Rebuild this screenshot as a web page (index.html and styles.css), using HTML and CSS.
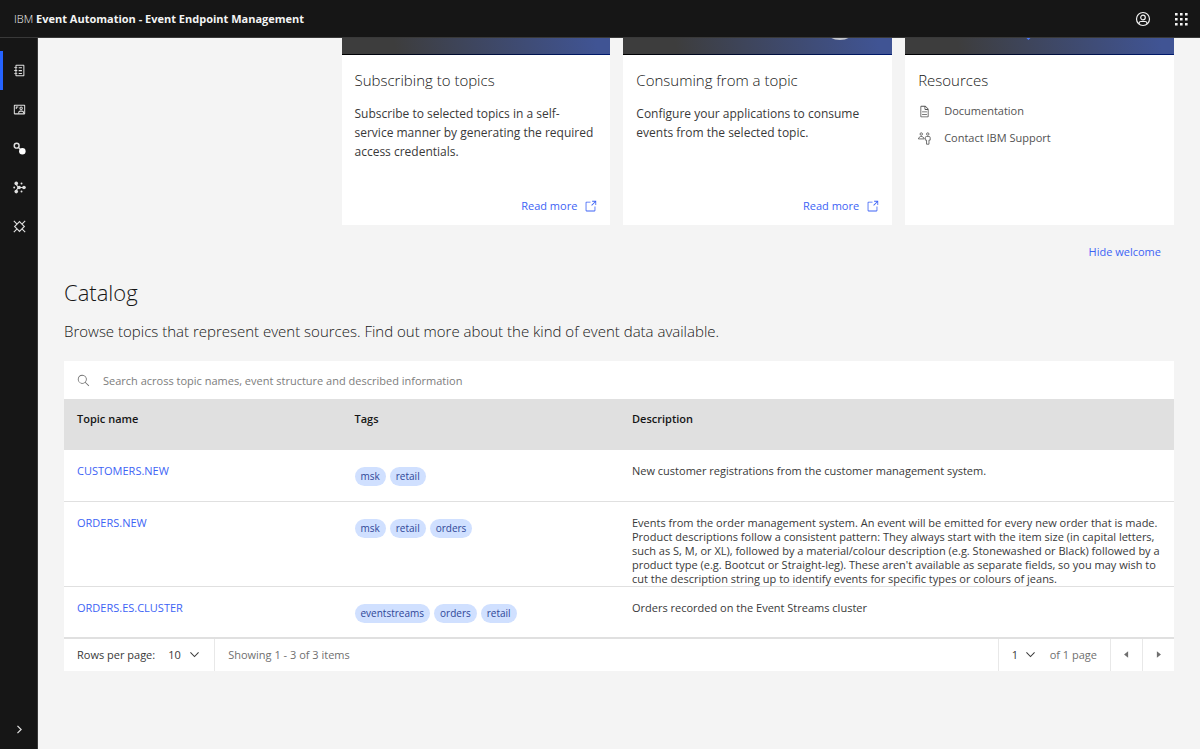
FILE: index.html
```html
<!DOCTYPE html>
<html lang="en">
<head>
<meta charset="utf-8">
<title>Event Endpoint Management</title>
<link rel="stylesheet" href="styles.css">
</head>
<body>
<header class="topbar">
  <div class="brand">IBM <strong>Event Automation - Event Endpoint Management</strong></div>
  <div class="topbar-actions">
    <button class="icon-btn" aria-label="User profile"><svg class="icon icon-lg" viewBox="0 0 32 32"><g fill="none" stroke="currentColor" stroke-width="2.4"><circle cx="16" cy="16" r="13"/><circle cx="16" cy="13" r="4.6"/><path d="M8 26v-1a4 4 0 0 1 4-4h8a4 4 0 0 1 4 4v1"/></g></svg></button>
    <button class="icon-btn" aria-label="Switch application"><svg class="icon icon-lg" viewBox="0 0 16 16"><path d="M2 2h2.600v2.600H2zM7 2h2.600v2.600H7zM12 2h2.600v2.600H12zM2 7h2.600v2.600H2zM7 7h2.600v2.600H7zM12 7h2.600v2.600H12zM2 12h2.600v2.600H2zM7 12h2.600v2.600H7zM12 12h2.600v2.600H12z"/></svg></button>
  </div>
</header>
<div class="shell">
  <nav class="sidebar" aria-label="Main">
    <a class="nav-item nav-active" href="#" aria-label="Catalog"><svg class="icon" viewBox="0 0 32 32"><path d="M26 2H8a2 2 0 0 0-2 2v4H3v2h3v5H3v2h3v5H3v2h3v4a2 2 0 0 0 2 2h18a2 2 0 0 0 2-2V4a2 2 0 0 0-2-2Zm-.5 25.500H8.500V24h2v-2h-2v-5h2v-2h-2v-5h2V8h-2V4.500h17Z"/><path d="M14 8h8v2.600h-8zM14 15h8v2.600h-8zM14 22h8v2.600h-8z"/></svg></a>
    <a class="nav-item" href="#" aria-label="Subscriptions"><svg class="icon" viewBox="0 0 32 32"><path d="M28 4H4a2 2 0 0 0-2 2v20a2 2 0 0 0 2 2h24a2 2 0 0 0 2-2V6a2 2 0 0 0-2-2ZM4.500 25.500v-19h23v19Z"/><g fill="none" stroke="currentColor" stroke-width="2.500"><circle cx="20" cy="13" r="3"/><path d="M14 26v-2a4 4 0 0 1 4-4h4a4 4 0 0 1 4 4v2M7 10h6M8 9v6"/></g></svg></a>
    <a class="nav-item" href="#" aria-label="Topics"><svg class="icon" viewBox="0 0 32 32"><circle cx="9" cy="9" r="6" fill="none" stroke="currentColor" stroke-width="3.500"/><path d="m13 13 5 5" stroke="currentColor" stroke-width="3"/><circle class="dot-solid" cx="23" cy="23" r="8"/></svg></a>
    <a class="nav-item" href="#" aria-label="Clusters"><svg class="icon" viewBox="0 0 32 32"><path d="m7 7 6 9-6 9M13 16h14" fill="none" stroke="currentColor" stroke-width="2.500"/><circle cx="8" cy="6" r="4.500"/><circle cx="8" cy="26" r="4.500"/><circle cx="15" cy="16" r="4.500"/><circle cx="27" cy="16" r="4.500"/><circle cx="21" cy="6" r="2.400"/><circle cx="21" cy="26" r="2.400"/><circle cx="3" cy="16" r="2.400"/></svg></a>
    <a class="nav-item" href="#" aria-label="Gateways"><svg class="icon" viewBox="0 0 32 32"><g fill="none" stroke="currentColor" stroke-width="2.800"><path d="m10 10 6-6 6 6M10 22l6 6 6-6M10 10l-6 6 6 6M22 10l6 6-6 6"/><path d="m2 2 8 8M30 2l-8 8M2 30l8-8M30 30l-8-8"/></g></svg></a>
    <button class="nav-item nav-expand" aria-label="Expand navigation"><svg class="icon" viewBox="0 0 32 32"><path d="m11 7 9 9-9 9" fill="none" stroke="currentColor" stroke-width="3"/></svg></button>
  </nav>
  <main class="content">
    <section class="welcome" aria-label="Welcome">
      <div class="cards">
        <article class="card">
          <div class="card-banner"></div>
          <div class="card-body">
            <h2 class="card-title">Subscribing to topics</h2>
            <p class="card-text">Subscribe to selected topics in a self-service manner by generating the required access credentials.</p>
            <a class="link read-more" href="#">Read more <svg class="icon" viewBox="0 0 32 32"><path d="M26 28H6a2 2 0 0 1-2-2V6a2 2 0 0 1 2-2h10v2H6v20h20V16h2v10a2 2 0 0 1-2 2Z"/><path d="M20 2v2h6.600L18 12.600l1.400 1.400L28 5.400V12h2V2Z"/></svg></a>
          </div>
        </article>
        <article class="card">
          <div class="card-banner"><svg class="banner-art" viewBox="0 0 268 16"><path d="M208 0h17q-3 2-8.500 2t-8.500-2z" fill="#c4c7cf"/></svg></div>
          <div class="card-body">
            <h2 class="card-title">Consuming from a topic</h2>
            <p class="card-text">Configure your applications to consume events from the selected topic.</p>
            <a class="link read-more" href="#">Read more <svg class="icon" viewBox="0 0 32 32"><path d="M26 28H6a2 2 0 0 1-2-2V6a2 2 0 0 1 2-2h10v2H6v20h20V16h2v10a2 2 0 0 1-2 2Z"/><path d="M20 2v2h6.600L18 12.600l1.400 1.400L28 5.400V12h2V2Z"/></svg></a>
          </div>
        </article>
        <article class="card">
          <div class="card-banner"><svg class="banner-art" viewBox="0 0 268 16"><path d="M121 0h4l-2 2z" fill="#4b7bff"/></svg></div>
          <div class="card-body">
            <h2 class="card-title">Resources</h2>
            <ul class="resources">
              <li><a class="resource" href="#"><svg class="icon" viewBox="0 0 32 32"><path d="m25.700 9.300-7-7A.9.9 0 0 0 18 2H8a2 2 0 0 0-2 2v24a2 2 0 0 0 2 2h16a2 2 0 0 0 2-2V10a.9.900 0 0 0-.3-.7ZM18 4.400l5.600 5.600H18ZM24 28H8V4h8v6a2 2 0 0 0 2 2h6Z"/><path d="M10 22h12v2H10zM10 16h12v2H10z"/></svg>Documentation</a></li>
              <li><a class="resource" href="#"><svg class="icon" viewBox="0 0 32 32"><g fill="none" stroke="currentColor" stroke-width="2"><circle cx="24" cy="5" r="3"/><path d="M21 11h6a3 3 0 0 1 3 3v6h-3v10h-6V20h-3v-6a3 3 0 0 1 3-3Z"/><circle cx="8" cy="5" r="3"/><path d="M1 17v-2l5-4h4l5 4v2Z"/></g></svg>Contact IBM Support</a></li>
            </ul>
          </div>
        </article>
      </div>
      <button class="link hide-welcome">Hide welcome</button>
    </section>
    <section class="catalog">
      <h1 class="page-title">Catalog</h1>
      <p class="page-lead">Browse topics that represent event sources. Find out more about the kind of event data available.</p>
      <label class="search"><svg class="icon" viewBox="0 0 32 32"><path d="m30 28.600-8.600-8.600a11 11 0 1 0-1.400 1.400l8.600 8.600ZM4 13a9 9 0 1 1 9 9 9 9 0 0 1-9-9Z"/></svg>
        <input class="search-input" type="search" aria-label="Search topics" placeholder="Search across topic names, event structure and described information"></label>
      <table class="topics">
        <thead><tr><th class="col-name" scope="col">Topic name</th><th class="col-tags" scope="col">Tags</th><th scope="col">Description</th></tr></thead>
        <tbody>
          <tr><td><a class="link" href="#">CUSTOMERS.NEW</a></td><td><div class="tags"><span class="tag">msk</span><span class="tag">retail</span></div></td><td>New customer registrations from the customer management system.</td></tr>
          <tr><td><a class="link" href="#">ORDERS.NEW</a></td><td><div class="tags"><span class="tag">msk</span><span class="tag">retail</span><span class="tag">orders</span></div></td><td>Events from the order management system. An event will be emitted for every new order that is made. Product descriptions follow a consistent pattern: They always start with the item size (in capital letters, such as S, M, or XL), followed by a material/colour description (e.g. Stonewashed or Black) followed by a product type (e.g. Bootcut or Straight-leg). These aren't available as separate fields, so you may wish to cut the description string up to identify events for specific types or colours of jeans.</td></tr>
          <tr><td><a class="link" href="#">ORDERS.ES.CLUSTER</a></td><td><div class="tags"><span class="tag">eventstreams</span><span class="tag">orders</span><span class="tag">retail</span></div></td><td>Orders recorded on the Event Streams cluster</td></tr>
        </tbody>
      </table>
      <div class="pagination">
        <div class="page-size"><label for="rows">Rows per page:</label>
          <span class="picker"><select id="rows"><option>10</option></select><svg class="icon chevron" viewBox="0 0 32 32"><path d="m6 11 10 10 10-10" fill="none" stroke="currentColor" stroke-width="2.500"/></svg></span></div>
        <span class="showing">Showing 1 - 3 of 3 items</span>
        <div class="page-pick"><span class="picker"><select class="page-number" aria-label="Page number"><option>1</option></select><svg class="icon chevron" viewBox="0 0 32 32"><path d="m6 11 10 10 10-10" fill="none" stroke="currentColor" stroke-width="2.500"/></svg></span><span class="muted">of 1 page</span></div>
        <button class="page-btn" aria-label="Previous page"><svg class="icon" viewBox="0 0 32 32"><path d="M20 24 10 16 20 8z"/></svg></button>
        <button class="page-btn" aria-label="Next page"><svg class="icon" viewBox="0 0 32 32"><path d="m12 8 10 8-10 8z"/></svg></button>
      </div>
    </section>
  </main>
</div>
</body>
</html>
```
FILE: styles.css
```css
* { box-sizing: border-box; }
body {
  margin: 0;
  min-height: 100vh;
  display: flex;
  flex-direction: column;
  background: #f4f4f4;
  color: #161616;
  font: 11px/14px "Open Sans", "Noto Sans", sans-serif;
}
h1, h2, p, ul { margin: 0; padding: 0; font-weight: 300; }
ul { list-style: none; }
a { color: inherit; text-decoration: none; }
button, input, select { font: inherit; color: inherit; border: 0; padding: 0; margin: 0; background: none; border-radius: 0; }
.icon { width: 13px; height: 13px; fill: currentColor; flex: none; display: block; }
.icon-lg { width: 16px; height: 16px; }
.link { color: #3d63f5; }

.topbar {
  display: flex;
  align-items: center;
  justify-content: space-between;
  height: 38px;
  padding: 0 0 0 14px;
  background: #161616;
  border-bottom: 1px solid #393939;
  color: #f4f4f4;
}
.brand { font-weight: 300; }
.brand strong { font-weight: 700; }
.topbar-actions { display: flex; }
.icon-btn { display: grid; place-items: center; width: 38px; height: 37px; }

.shell { display: flex; flex: 1; }
.sidebar {
  display: flex;
  flex-direction: column;
  width: 38px;
  flex: none;
  padding-top: 13px;
  background: #161616;
  border-right: 1px solid #393939;
  color: #e0e0e0;
}
.nav-item { display: grid; place-items: center; height: 39px; border-left: 3px solid transparent; padding-right: 2px; }
.nav-active { border-left-color: #2563ff; }
.nav-expand { margin-top: auto; }
.dot-solid { fill: #fff; }

.content { flex: 1; min-width: 0; padding: 0 26px 26px; }
.welcome { display: flex; flex-direction: column; align-items: flex-end; }
.cards { display: grid; grid-template-columns: repeat(3, 1fr); gap: 13px; width: 75%; }
.card { display: flex; flex-direction: column; background: #fff; }
.card-banner {
  height: 17px;
  background: linear-gradient(90deg, #000, #001a6e) bottom / 100% 1px no-repeat, linear-gradient(80deg, #3d3d3d 20%, #405494 95%);
}
.banner-art { display: block; width: 100%; height: 16px; }
.card-body { display: flex; flex-direction: column; min-height: 170px; padding: 15px 13px 12px; }
.card-title { font-size: 15px; line-height: 20px; margin-bottom: 14px; }
.card-text { font-size: 12px; line-height: 19px; color: #393939; font-weight: 400; }
.read-more { display: flex; align-items: center; gap: 7px; margin-top: auto; align-self: flex-end; }
.resources { display: grid; gap: 13px; font-weight: 400; }
.resource { display: flex; align-items: center; gap: 13px; color: #525252; }
.hide-welcome { margin: 20px 13px 0 0; }

.page-title { font-size: 22px; line-height: 30px; margin-top: 18px; }
.page-lead { font-size: 15px; line-height: 22px; margin: 13px 0 19px; }
.search { display: flex; align-items: center; gap: 13px; height: 38px; padding: 0 13px; background: #fff; color: #6f6f6f; }
.search-input { flex: 1; min-width: 0; height: 38px; outline: 0; }
.search-input::placeholder { color: #7d7d7d; opacity: 1; }

.topics { width: 100%; table-layout: fixed; border-collapse: collapse; background: #fff; }
.col-name, .col-tags { width: 25%; }
.topics th { height: 51px; padding: 13px 13px 0; background: #e0e0e0; text-align: left; vertical-align: top; font-weight: 600; }
.topics td { height: 51px; padding: 14px 13px 0; vertical-align: top; border-bottom: 1px solid #e0e0e0; color: #393939; }
.tags { display: flex; gap: 4px; padding-top: 3px; }
.tag { padding: 0 6px; border-radius: 10px; background: #d0e0ff; color: #2f4698; font-size: 10px; line-height: 19px; }

.pagination { display: flex; align-items: center; height: 33px; border-top: 1px solid #e0e0e0; background: #fff; color: #393939; }
.page-size, .page-pick { display: flex; align-items: center; gap: 13px; height: 32px; padding: 0 13px; }
.page-size { border-right: 1px solid #e8e8e8; }
.page-pick { border-left: 1px solid #e8e8e8; }
.picker { display: flex; align-items: center; gap: 4px; }
.picker select { appearance: none; width: 16px; outline: 0; }
.picker .page-number { width: 8px; }
.showing { flex: 1; padding-left: 13px; color: #6f6f6f; }
.muted { color: #6f6f6f; }
.page-btn { display: grid; place-items: center; width: 32px; height: 32px; border-left: 1px solid #e8e8e8; color: #6f6f6f; }
```
